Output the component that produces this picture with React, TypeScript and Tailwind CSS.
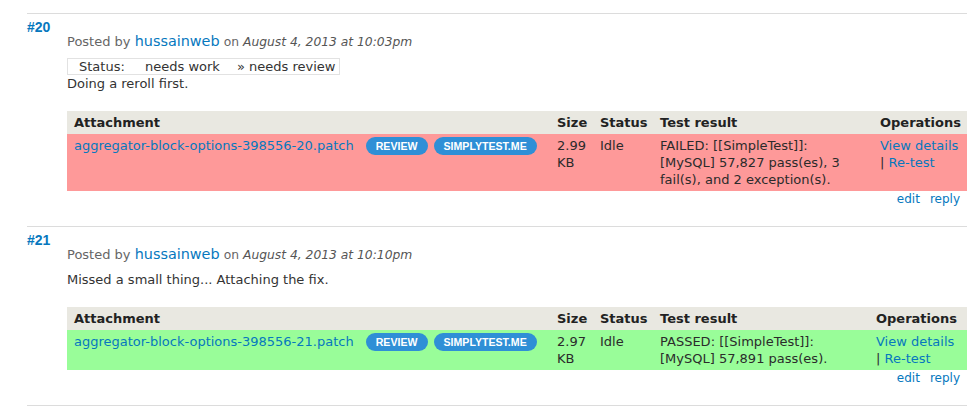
import React from 'react';

type Attachment = {
  file: string;
  size: string;
  status: string;
  result: string;
  passed: boolean;
  testWidth: string;
  opsWidth: string;
};

type CommentData = {
  num: string;
  time: string;
  statusChange?: boolean;
  body: string;
  attachment: Attachment;
};

const comments: CommentData[] = [
  {
    num: '#20',
    time: 'August 4, 2013 at 10:03pm',
    statusChange: true,
    body: 'Doing a reroll first.',
    attachment: {
      file: 'aggregator-block-options-398556-20.patch',
      size: '2.99 KB',
      status: 'Idle',
      result: 'FAILED: [[SimpleTest]]: [MySQL] 57,827 pass(es), 3 fail(s), and 2 exception(s).',
      passed: false,
      testWidth: 'w-[220px]',
      opsWidth: 'w-[94px]',
    },
  },
  {
    num: '#21',
    time: 'August 4, 2013 at 10:10pm',
    body: 'Missed a small thing... Attaching the fix.',
    attachment: {
      file: 'aggregator-block-options-398556-21.patch',
      size: '2.97 KB',
      status: 'Idle',
      result: 'PASSED: [[SimpleTest]]: [MySQL] 57,891 pass(es).',
      passed: true,
      testWidth: 'w-[216px]',
      opsWidth: 'w-[98px]',
    },
  },
];

function Pill({ label }: { label: string }) {
  return (
    <span className="inline-flex h-[18px] items-center rounded-full bg-[#2f8fd6] px-[10px] font-['Liberation_Sans',Arial,sans-serif] text-[10.6px] font-bold text-white">
      {label}
    </span>
  );
}

function AttachmentTable({ a }: { a: Attachment }) {
  const rowBg = a.passed ? 'bg-[#99fd99]' : 'bg-[#fe9999]';
  return (
    <table className="w-[900px] table-fixed border-collapse text-[13px] leading-[17px]">
      <thead>
        <tr className="bg-[#e9e8e1] text-left font-bold text-[#222]">
          <th className="w-[483px] px-[7px] py-[3px]">Attachment</th>
          <th className="w-[43px] px-[7px] py-[3px]">Size</th>
          <th className="w-[60px] px-[7px] py-[3px]">Status</th>
          <th className={`${a.testWidth} px-[7px] py-[3px]`}>Test result</th>
          <th className={`${a.opsWidth} px-[7px] py-[3px]`}>Operations</th>
        </tr>
      </thead>
      <tbody>
        <tr className={`${rowBg} align-top text-[#2b2b2b]`}>
          <td className="px-[7px] pt-[3px] pb-[3px]">
            <div className="flex items-start">
              <a className="text-[#0678be]">{a.file}</a>
              <div className="ml-[12px] flex gap-[6px]">
                <Pill label="REVIEW" />
                <Pill label="SIMPLYTEST.ME" />
              </div>
            </div>
          </td>
          <td className="px-[7px] py-[3px]">{a.size}</td>
          <td className="px-[7px] py-[3px]">{a.status}</td>
          <td className="px-[7px] py-[3px]">{a.result}</td>
          <td className="px-[7px] py-[3px]">
            <a className="text-[#0678be]">View details</a> | <a className="text-[#0678be]">Re-test</a>
          </td>
        </tr>
      </tbody>
    </table>
  );
}

function Comment({ c }: { c: CommentData }) {
  return (
    <div className="border-t border-[#dcdcdc]">
      <div className="flex">
        <div className="w-[40px] shrink-0 pt-[4px] font-['Liberation_Sans',Arial,sans-serif] text-[14px] font-bold leading-[18px] text-[#0678be]">
          {c.num}
        </div>
        <div className="pt-[18px] pb-[18px]">
          <div className="h-[18px] overflow-hidden whitespace-nowrap text-[13px] leading-[18px] text-[#666]">
            Posted by <a className="text-[14.4px] text-[#0678be]">hussainweb</a>{' '}
            <span className="text-[12.3px]">
              on <em className="text-[#555]">{c.time}</em>
            </span>
          </div>
          <div className="mt-[8px]">
            {c.statusChange && (
              <div className="flex w-[273px] border border-[#e2e2e2] pl-[11px] text-[13px] leading-[15px] text-[#333]">
                <span className="w-[66px]">Status:</span>
                <span className="w-[92px]">needs work</span>
                <span>» needs review</span>
              </div>
            )}
            <p className="text-[13px] leading-[17px] text-[#333]">{c.body}</p>
          </div>
          <div className="mt-[19px]">
            <AttachmentTable a={c.attachment} />
          </div>
          <div className="flex justify-end gap-[10px] pr-[7px] text-[12px] leading-[17px] text-[#0678be]">
            <a>edit</a>
            <a>reply</a>
          </div>
        </div>
      </div>
    </div>
  );
}

export default function App() {
  return (
    <div className="min-h-[418px] bg-white pt-[13px] pl-[27px] font-['DejaVu_Sans',Verdana,sans-serif]">
      <div className="w-[940px] border-b border-[#dcdcdc]">
        {comments.map((c) => (
          <Comment key={c.num} c={c} />
        ))}
      </div>
    </div>
  );
}
